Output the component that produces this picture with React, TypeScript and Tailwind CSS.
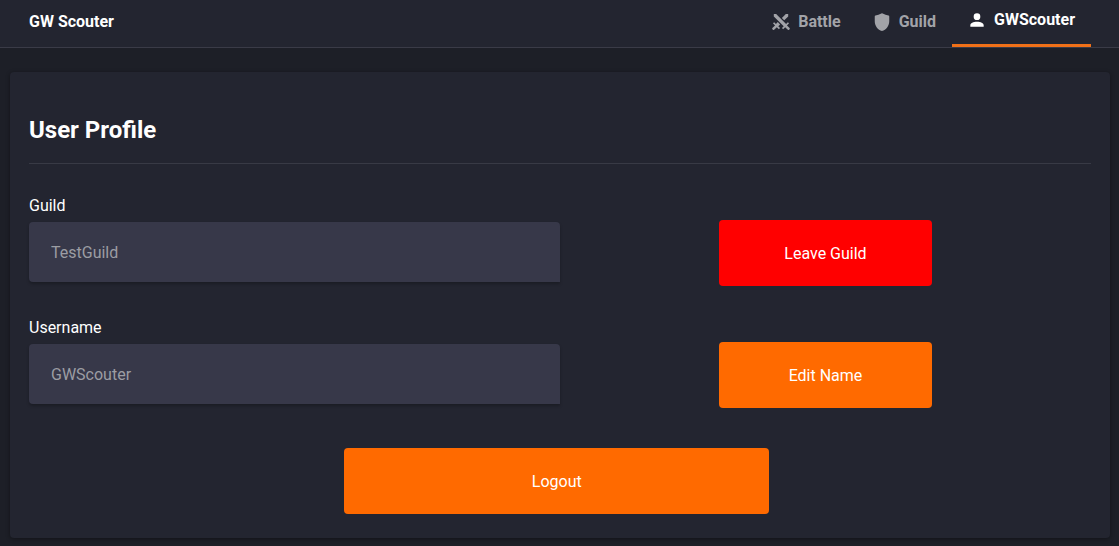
import type { ReactNode } from "react";

type TabProps = { label: string; path: string; active?: boolean };

const SWORDS =
  "M6.2,2.44L18.1,14.34L20.22,12.22L21.63,13.63L19.16,16.1L22.34,19.28C22.73,19.67 22.73,20.3 22.34,20.69L21.63,21.4C21.24,21.79 20.61,21.79 20.22,21.4L17,18.23L14.56,20.7L13.15,19.29L15.27,17.17L3.37,5.27V2.44H6.2M15.89,10L20.63,5.26V2.44H17.8L13.06,7.18L15.89,10M10.94,15L8.11,12.13L5.9,14.34L3.78,12.22L2.37,13.63L4.84,16.1L1.66,19.29C1.27,19.68 1.27,20.31 1.66,20.7L2.37,21.41C2.76,21.8 3.39,21.8 3.78,21.41L7,18.23L9.44,20.7L10.85,19.29L8.73,17.17L10.94,15Z";
const SHIELD =
  "M11.2 1.9Q12 1.3 12.8 1.9C15 3.2 17.5 4 19.8 4.3Q20.7 4.4 20.7 5.3V11C20.7 16.6 17 21.3 12 22.8C7 21.3 3.3 16.6 3.3 11V5.3Q3.3 4.4 4.2 4.3C6.5 4 9 3.2 11.2 1.9Z";
const PERSON =
  "M12,4A4,4 0 0,1 16,8A4,4 0 0,1 12,12A4,4 0 0,1 8,8A4,4 0 0,1 12,4M12,14C16.42,14 20,15.79 20,18V20H4V18C4,15.79 7.58,14 12,14Z";

function Tab({ label, path, active }: TabProps) {
  return (
    <a
      href="#"
      aria-current={active ? "page" : undefined}
      className={
        active
          ? "flex items-center gap-[7px] border-b-3 border-[#f07018] pt-px pr-4 pb-[5px] pl-[15px] text-white"
          : "flex items-center gap-[7px] pr-4 pb-1 pl-[15px] text-[#a2a3a8]"
      }
    >
      <svg viewBox="0 0 24 24" className="size-5 fill-current" aria-hidden="true">
        <path d={path} />
      </svg>
      {label}
    </a>
  );
}

function Field({ id, label, value, children }: { id: string; label: string; value: string; children: ReactNode }) {
  return (
    <div className="grid grid-cols-2 items-end">
      <div>
        <label htmlFor={id} className="mb-1 block">
          {label}
        </label>
        <input
          id={id}
          value={value}
          disabled
          className="mb-1 block h-[60px] w-full rounded-t rounded-bl bg-[#373849] px-[22px] text-[#9c9da3] shadow-[0_2px_3px_rgba(0,0,0,0.25)]"
        />
      </div>
      <div className="flex justify-center">{children}</div>
    </div>
  );
}

export default function App() {
  return (
    <div className="min-h-screen bg-[#1d1f27] pb-2 font-['Roboto',sans-serif] text-base leading-6 text-white">
      <header className="flex h-12 items-stretch justify-between border-b border-[#3a3b47] bg-[#232530] pr-7 pl-[29px] font-bold">
        <span className="flex items-center pb-[3px]">GW Scouter</span>
        <nav className="flex">
          <Tab label="Battle" path={SWORDS} />
          <Tab label="Guild" path={SHIELD} />
          <Tab label="GWScouter" path={PERSON} active />
        </nav>
      </header>
      <main className="mt-6 mr-[9px] ml-2.5 rounded bg-[#232530] px-[19px] pt-[41px] pb-6 shadow-[0_1px_4px_rgba(0,0,0,0.4)]">
        <h1 className="border-b border-[#383a45] pb-4 text-2xl leading-[34px] font-bold">User Profile</h1>
        <div className="mt-[30px] flex flex-col gap-[30px]">
          <Field id="guild" label="Guild" value="TestGuild">
            <button className="h-[66px] w-2/5 rounded bg-[#ff0000] pt-0.5">Leave Guild</button>
          </Field>
          <Field id="username" label="Username" value="GWScouter">
            <button className="h-[66px] w-2/5 rounded bg-[#ff6a00] pt-0.5">Edit Name</button>
          </Field>
        </div>
        <button className="mt-10 ml-[29.7%] block h-[66px] w-2/5 rounded bg-[#ff6a00] pt-0.5">Logout</button>
      </main>
    </div>
  );
}
